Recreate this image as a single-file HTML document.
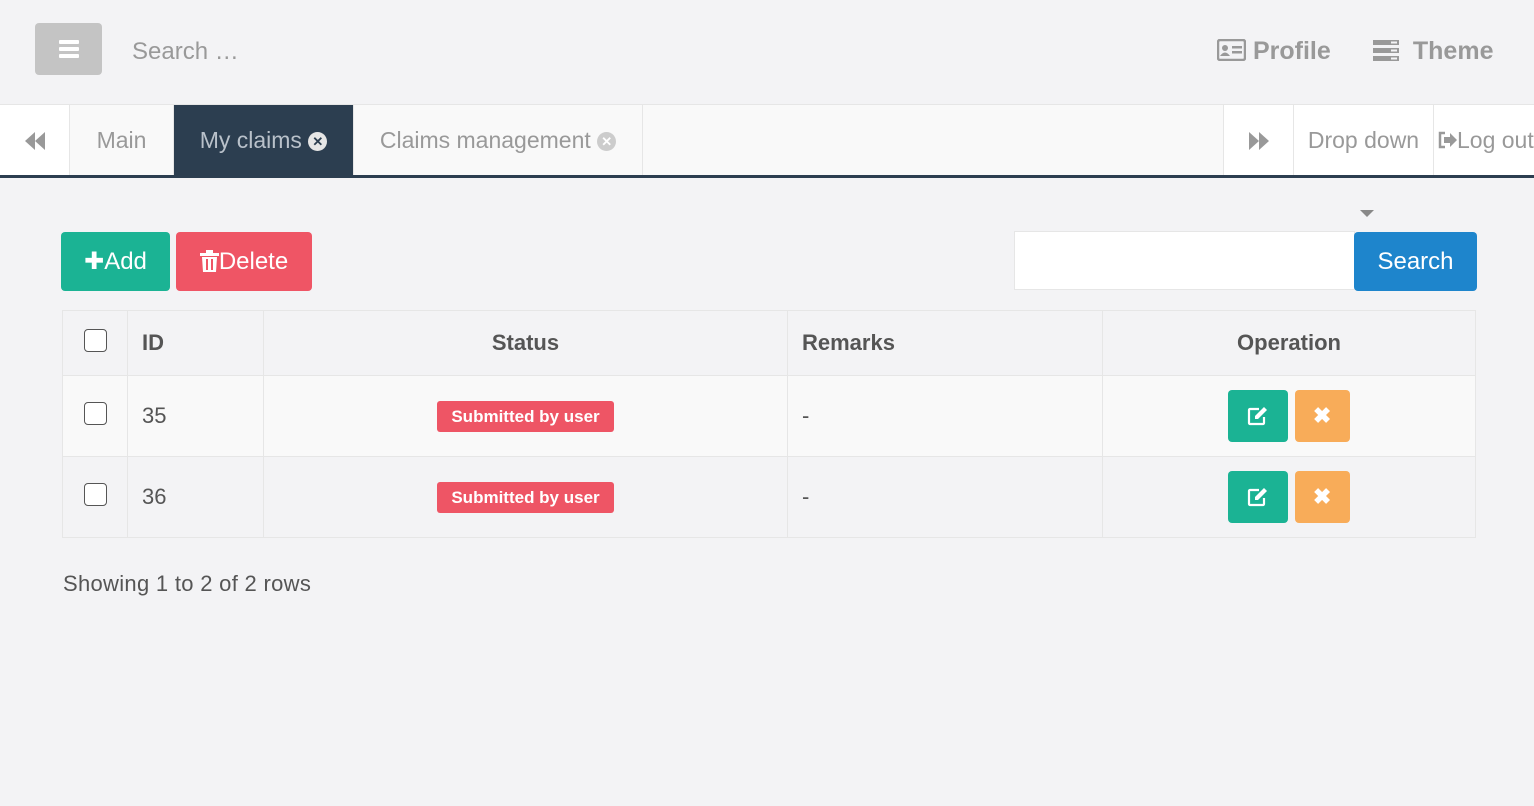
<!DOCTYPE html>
<html><head><meta charset="utf-8"><style>
*{box-sizing:border-box;margin:0;padding:0}
body{width:1534px;height:806px;background:#f3f3f5;font-family:"Liberation Sans",sans-serif;position:relative;overflow:hidden;color:#555}
.abs{position:absolute}
.menu{left:35px;top:23px;width:67px;height:52px;background:#c4c4c4;border-radius:4px}
.menu i{position:absolute;left:24px;width:20px;height:4px;background:#fff;border-radius:1px}
.tabs{left:0;top:104px;width:1534px;height:71px;background:#f9f9f9;border-top:1px solid #e6e6e6}
.bar{left:0;top:175px;width:1534px;height:3px;background:#2c3e50}
.tab{position:absolute;top:0;height:71px;line-height:71px;font-size:23px;color:#999;border-right:1px solid #e6e6e6}
.x{display:inline-block;width:19px;height:19px;border-radius:50%;color:#fff;font-size:13px;line-height:19px;text-align:center;font-weight:bold;vertical-align:2px}
.btn{position:absolute;height:59px;border-radius:4px;color:#fff;font-size:24px;line-height:59px;text-align:center}
table{position:absolute;left:62px;top:310px;width:1414px;border-collapse:collapse;font-size:22px}
td,th{border:1px solid #e6e6e6;padding:0 14px}
th{height:65px;font-weight:bold;color:#555}
td{height:81px}
tr.o td{background:#f9f9f9}
.cb{display:inline-block;width:23px;height:23px;border:1.5px solid #555;border-radius:4px;background:#fff;vertical-align:middle;position:relative;top:-4px}
.badge{display:inline-block;background:#ee5565;color:#fff;font-weight:bold;font-size:17px;padding:0 14px;height:31px;line-height:31px;border-radius:3px}
.ob{display:inline-block;height:52px;border-radius:4px;vertical-align:middle;color:#fff;text-align:center;line-height:52px;font-weight:bold;font-size:22px}
</style></head><body>
<div class="abs menu"><i style="top:17px"></i><i style="top:24px"></i><i style="top:31px"></i></div>
<div class="abs" style="left:132px;top:38px;font-size:24px;color:#999">Search …</div>
<div class="abs" style="left:1217px;top:37px;font-size:25px;font-weight:bold;color:#999">
<svg width="29" height="22" viewBox="0 0 29 22" style="vertical-align:-2px"><rect x="1" y="1" width="27" height="20" rx="2" fill="none" stroke="#999" stroke-width="2.5"/><circle cx="8" cy="9" r="3" fill="#999"/><path d="M3 17q5-7 10 0z" fill="#999"/><rect x="15" y="7" width="10" height="2.5" fill="#999"/><rect x="15" y="12" width="10" height="2.5" fill="#999"/></svg> Profile</div>
<div class="abs" style="left:1373px;top:37px;font-size:25px;font-weight:bold;color:#999">
<svg width="26" height="22" viewBox="0 0 26 22" style="vertical-align:-2px"><rect x="0" y="1" width="26" height="5" fill="#999"/><rect x="0" y="9" width="26" height="5" fill="#999"/><rect x="0" y="17" width="26" height="5" fill="#999"/><rect x="18" y="2.5" width="6" height="2" fill="#f3f3f5"/><rect x="18" y="10.5" width="6" height="2" fill="#f3f3f5"/><rect x="18" y="18.5" width="6" height="2" fill="#f3f3f5"/></svg>&nbsp; Theme</div>
<div class="abs tabs">
<div class="tab" style="left:0;width:70px;background:#fff;text-align:center"><svg width="22" height="18" viewBox="0 0 22 18" style="vertical-align:-2px"><path d="M11 0L1 9l10 9zM21 0L11 9l10 9z" fill="#999"/></svg></div>
<div class="tab" style="left:70px;width:104px;text-align:center">Main</div>
<div class="tab" style="left:174px;width:180px;background:#2c3e50;color:#b9c1ca;text-align:center">My claims <span class="x" style="background:#e6e6e6;color:#2c3e50">✕</span></div>
<div class="tab" style="left:354px;width:289px;text-align:center">Claims management <span class="x" style="background:#ccc">✕</span></div>
<div class="tab" style="left:1223px;width:71px;background:#fff;text-align:center;border-left:1px solid #e6e6e6"><svg width="22" height="18" viewBox="0 0 22 18" style="vertical-align:-2px"><path d="M1 0l10 9-10 9zM11 0l10 9-10 9z" fill="#999"/></svg></div>
<div class="tab" style="left:1294px;width:140px;background:#fff;text-align:center">Drop down</div>
<div class="tab" style="left:1434px;width:110px;background:#fff;padding-left:3px;border:none"><svg width="20" height="18" viewBox="0 0 20 18" style="vertical-align:-1px"><path d="M8 2H3v14h5" fill="none" stroke="#999" stroke-width="2.5"/><path d="M7 6h6V2l7 7-7 7v-4H7z" fill="#999"/></svg>Log out</div>
</div>
<div class="abs bar"></div>
<div class="abs" style="left:1360px;top:210px;width:0;height:0;border-left:7px solid transparent;border-right:7px solid transparent;border-top:7px solid #888"></div>
<div class="btn" style="left:61px;top:232px;width:109px;background:#1bb394">✚Add</div>
<div class="btn" style="left:176px;top:232px;width:136px;background:#ef5565"><svg width="19" height="22" viewBox="0 0 19 22" style="vertical-align:-3px"><rect x="0" y="3" width="19" height="3" fill="#fff"/><rect x="6" y="0" width="7" height="4" fill="#fff"/><path d="M2 7h15l-1 15H3z" fill="#fff"/><rect x="6" y="9" width="2" height="11" fill="#ef5565"/><rect x="11" y="9" width="2" height="11" fill="#ef5565"/></svg>Delete</div>
<div class="abs" style="left:1014px;top:231px;width:341px;height:59px;background:#fff;border:1px solid #e6e6e6"></div>
<div class="btn" style="left:1354px;top:232px;width:123px;background:#1e85cc">Search</div>
<table>
<tr><th style="width:65px;text-align:center"><span class="cb"></span></th><th style="width:136px;text-align:left">ID</th><th style="width:524px">Status</th><th style="width:315px;text-align:left">Remarks</th><th>Operation</th></tr>
<tr class="o"><td style="text-align:center"><span class="cb"></span></td><td>35</td><td style="text-align:center"><span class="badge">Submitted by user</span></td><td>-</td><td style="text-align:center;padding:0"><span class="ob" style="background:#1bb394;width:60px"><svg width="22" height="20" viewBox="0 0 22 20" style="vertical-align:-3px"><path d="M12 3H3a1 1 0 0 0-1 1v13a1 1 0 0 0 1 1h13a1 1 0 0 0 1-1v-6" fill="none" stroke="#fff" stroke-width="2.2"/><path d="M17 1l3 3-9 9H8v-3z" fill="#fff"/></svg></span> <span class="ob" style="background:#f8ac59;width:55px">✖</span></td></tr>
<tr><td style="text-align:center"><span class="cb"></span></td><td>36</td><td style="text-align:center"><span class="badge">Submitted by user</span></td><td>-</td><td style="text-align:center;padding:0"><span class="ob" style="background:#1bb394;width:60px"><svg width="22" height="20" viewBox="0 0 22 20" style="vertical-align:-3px"><path d="M12 3H3a1 1 0 0 0-1 1v13a1 1 0 0 0 1 1h13a1 1 0 0 0 1-1v-6" fill="none" stroke="#fff" stroke-width="2.2"/><path d="M17 1l3 3-9 9H8v-3z" fill="#fff"/></svg></span> <span class="ob" style="background:#f8ac59;width:55px">✖</span></td></tr>
</table>
<div class="abs" style="left:63px;top:571px;font-size:22px;color:#555;letter-spacing:0.3px">Showing 1 to 2 of 2 rows</div>
</body></html>
